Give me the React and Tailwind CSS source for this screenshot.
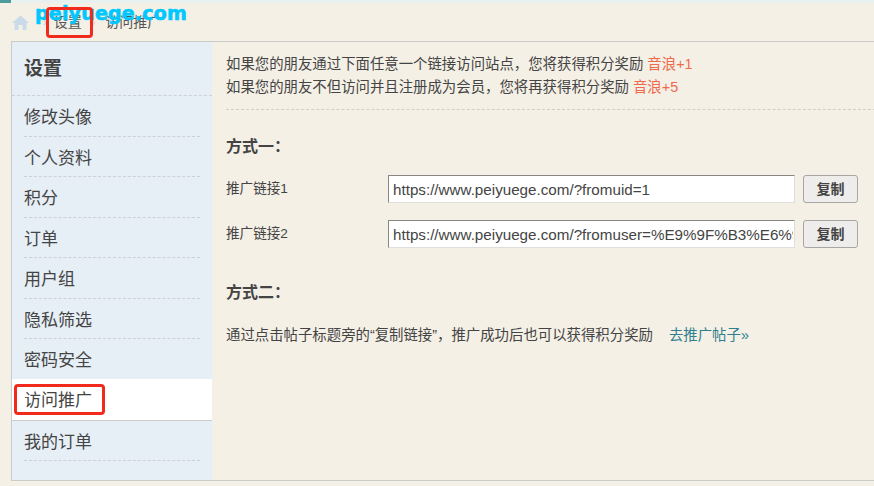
import React from "react";

const FONT = "font-['Liberation_Sans','Noto_Sans_CJK_SC',sans-serif]";

const menuItems = ["修改头像", "个人资料", "积分", "订单", "用户组", "隐私筛选", "密码安全", "访问推广", "我的订单"];

const links = [
  { label: "推广链接1", value: "https://www.peiyuege.com/?fromuid=1" },
  { label: "推广链接2", value: "https://www.peiyuege.com/?fromuser=%E9%9F%B3%E6%99%AA" },
];

const SideMenu = () => (
  <div className="w-[200px] shrink-0 bg-[#e6eef6] text-[#444]">
    <div className="h-[54px] border-b border-dashed border-[#cdd1d6] pl-3 pt-[12px] text-[19px] font-bold leading-[30px]">设置</div>
    {menuItems.map((item) =>
      item === "访问推广" ? (
        <div key={item} className="h-[42px] -mt-px bg-white border-b border-[#ccc] pl-3 text-[17px] leading-[44px]">
          {item}
        </div>
      ) : (
        <div key={item} className="px-3">
          <div className="h-[40.5px] border-b border-dashed border-[#cdd1d6] text-[17px] leading-[43px]">{item}</div>
        </div>
      )
    )}
  </div>
);

const App = () => {
  return (
    <div className={`relative w-[874px] h-[486px] overflow-hidden bg-[#f4f0e6] ${FONT}`}>
      <div className="h-[3px] bg-[#e8f0f0] flex">
        <div className="w-[11px] bg-[#4f9a9a]"></div>
      </div>

      {/* breadcrumb */}
      <div className="h-[38px] pl-[12px] flex items-center text-[14px] text-[#555]">
        <svg width="17" height="15" viewBox="0 0 17 15" className="mr-[14px]">
          <path d="M8.5 0.5 L17 8 H14.5 V15 H10.5 V10 H6.5 V15 H2.5 V8 H0 Z" fill="#c9dbe8" />
        </svg>
        <span className="mr-[4px] text-[#ccc] text-[11px]">›</span>
        <span className="ml-[3px]">设置</span>
        <span className="mx-[10px] text-[#ccc] text-[11px]">›</span>
        <span>访问推广</span>
      </div>

      {/* main panel */}
      <div className="ml-[11px] h-[440px] w-[900px] border border-[#cbcbc8] flex">
        <SideMenu />
        <div className="flex-1 pl-[14px] pt-[11px] text-[#444]">
          <div className="w-[660px] border-b border-dashed border-[#cfcfca] pb-[10px] text-[14.4px] leading-[23px]">
            <p>如果您的朋友通过下面任意一个链接访问站点，您将获得积分奖励 <span className="text-[#ef6a4c]">音浪+1</span></p>
            <p>如果您的朋友不但访问并且注册成为会员，您将再获得积分奖励 <span className="text-[#ef6a4c]">音浪+5</span></p>
          </div>

          <h3 className="mt-[25px] text-[16px] font-bold leading-[24px]">方式一：</h3>

          <div className="mt-[16px] flex flex-col gap-[17px]">
            {links.map((link) => (
              <div key={link.label} className="flex items-center w-[632px]">
                <span className="w-[162px] text-[13.6px]">{link.label}</span>
                <input
                  readOnly
                  value={link.value}
                  className="w-[407px] h-[28px] bg-white border border-[#e0dedb] border-t-[#8a8683] border-l-[#8a8683] pl-[4px] pr-[1px] text-[15.2px] text-[#444] outline-none"
                />
                <button className="ml-[8px] w-[55px] h-[28px] rounded-[3px] bg-[#eeedeb] border border-[#a8a6a3] text-[14px] font-bold text-[#444]">复制</button>
              </div>
            ))}
          </div>

          <h3 className="mt-[33px] text-[16px] font-bold leading-[24px]">方式二：</h3>

          <p className="mt-[18px] text-[14.4px] leading-[24px]">
            通过点击帖子标题旁的“复制链接”，推广成功后也可以获得积分奖励
            <span className="ml-[16px] text-[#2f7f8f]">去推广帖子»</span>
          </p>
        </div>
      </div>

      {/* annotations over the screenshot */}
      <div className="absolute left-[35px] top-[0px] text-[19px] font-bold leading-[26px] tracking-[0.2px] text-[#00c8ff] [-webkit-text-stroke:0.6px_#00c8ff] font-['DejaVu_Sans',sans-serif]">peiyuege.com</div>
      <div className="absolute left-[46px] top-[7px] w-[47px] h-[31px] rounded-[4px] border-[3px] border-[#f22a1c]"></div>
      <div className="absolute left-[14px] top-[384px] w-[91px] h-[31px] rounded-[4px] border-[3px] border-[#f22a1c]"></div>
    </div>
  );
};

export default App;
